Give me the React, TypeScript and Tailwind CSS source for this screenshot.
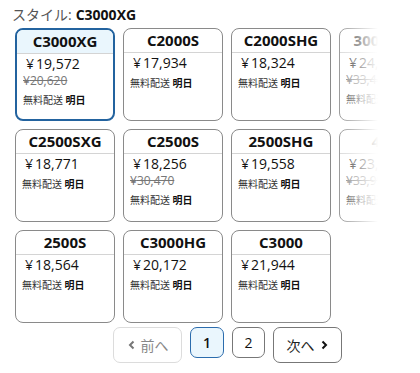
type Item = {
  name: string;
  price: string;
  was?: string;
  selected?: boolean;
};

const rows: (Item | null)[][] = [
  [
    { name: "C3000XG", price: "19,572", was: "20,620", selected: true },
    { name: "C2000S", price: "17,934" },
    { name: "C2000SHG", price: "18,324" },
    { name: "3000MHG", price: "24,480", was: "33,440" },
  ],
  [
    { name: "C2500SXG", price: "18,771" },
    { name: "C2500S", price: "18,256", was: "30,470" },
    { name: "2500SHG", price: "19,558" },
    { name: "4000", price: "23,980", was: "33,990" },
  ],
  [
    { name: "2500S", price: "18,564" },
    { name: "C3000HG", price: "20,172" },
    { name: "C3000", price: "21,944" },
    null,
  ],
];

function StyleCard({ item }: { item: Item }) {
  return (
    <div
      className={`h-[93px] w-[100px] shrink-0 overflow-hidden rounded-[8px] ${
        item.selected ? "border-2 border-[#23639f]" : "border border-[#8a8a8a]"
      }`}
    >
      <div
        className={`flex h-[24px] items-center justify-center border-b border-[#d4d4d4] text-[15px] font-bold text-[#111] ${
          item.selected ? "bg-[#eaf6fd]" : ""
        }`}
      >
        {item.name}
      </div>
      <div className="pl-[6px] pt-px">
        <div className="ml-[3px] text-[14px] leading-[18px] text-[#111]">
          <span className="mr-[2px]">¥</span>
          {item.price}
        </div>
        {item.was && (
          <div className="text-[12px] leading-[16px] text-[#777] line-through">¥{item.was}</div>
        )}
        <div className="mt-1 text-[10px] leading-[14px] text-[#333]">
          無料配送 <span className="font-bold text-[#111]">明日</span>
        </div>
      </div>
    </div>
  );
}

export default function App() {
  return (
    <div
      className="h-[373px] w-[420px] bg-white"
      style={{ fontFamily: '"Open Sans", "Noto Sans CJK JP", sans-serif' }}
    >
      <div className="flex h-[28px] items-center pl-[12px] text-[14px]">
        <span className="text-[#555]">スタイル: </span>
        <span className="ml-1 font-bold text-[#111]">C3000XG</span>
      </div>

      <div className="relative ml-[15px] w-[363px] overflow-hidden">
        <div className="flex flex-col gap-2">
          {rows.map((row, i) => (
            <div key={i} className="flex gap-2">
              {row.map((item, j) =>
                item ? <StyleCard key={j} item={item} /> : <div key={j} className="w-[100px] shrink-0" />
              )}
            </div>
          ))}
        </div>
        <div className="pointer-events-none absolute inset-y-0 right-0 w-[46px] bg-linear-to-r from-white/0 to-white" />
      </div>

      <div className="mt-[4px] ml-[113px] flex items-start gap-2 text-[14px]">
        <button className="flex h-[36px] w-[69px] items-center justify-center gap-[5px] rounded-[7px] border border-[#dcdcdc] text-[#888]">
          <svg width="9" height="10" viewBox="0 0 9 10" fill="none">
            <path d="M6.5 1.5 3 5l3.5 3.5" stroke="#777" strokeWidth="2" />
          </svg>
          <span>前へ</span>
        </button>
        <button className="flex h-[31px] w-[34px] items-center justify-center rounded-[7px] border border-[#2b6cad] bg-[#eaf6fd] font-semibold text-[#111]">
          1
        </button>
        <button className="flex h-[31px] w-[33px] items-center justify-center rounded-[7px] border border-[#777] text-[#111]">
          2
        </button>
        <button className="flex h-[36px] w-[69px] items-center justify-center gap-[5px] rounded-[7px] border border-[#777] text-[#222]">
          <span>次へ</span>
          <svg width="9" height="10" viewBox="0 0 9 10" fill="none">
            <path d="M2.5 1.5 6 5 2.5 8.5" stroke="#111" strokeWidth="2" />
          </svg>
        </button>
      </div>
    </div>
  );
}
